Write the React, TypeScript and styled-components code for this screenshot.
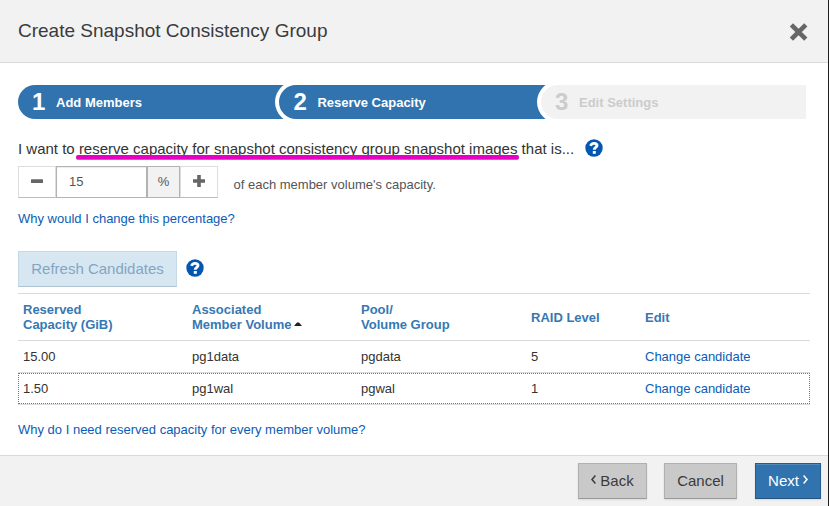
import React from "react";
import styled, { createGlobalStyle } from "styled-components";

const GlobalStyle = createGlobalStyle`
  *, *::before, *::after { box-sizing: border-box; }
  body {
    margin: 0;
    font-family: "Liberation Sans", Arial, sans-serif;
    font-size: 13px;
    color: #3b3b3b;
    background: #fff;
  }
`;

const Dialog = styled.div`
  display: flex;
  flex-direction: column;
  width: 829px;
  height: 506px;
  overflow: hidden;
  background: #fff;
  border-right: 1px solid #1e1e1e;
`;

const Header = styled.header`
  display: flex;
  align-items: center;
  justify-content: space-between;
  flex: none;
  height: 63px;
  padding: 0 19px 0 18px;
  background: #f2f2f2;
  border-bottom: 1px solid #dadada;
`;

const Title = styled.h1`
  margin: 0;
  font-size: 19px;
  line-height: 22px;
  font-weight: 400;
  color: #3b3b3b;
`;

const CloseButton = styled.button`
  display: flex;
  width: 20px;
  height: 20px;
  margin-top: 2px;
  padding: 0;
  border: 0;
  background: none;
  color: #666;
`;

const Body = styled.main`
  flex: none;
  height: 392px;
  padding: 22px 18px 0;
`;

const Steps = styled.ol`
  display: grid;
  grid-template-columns: 261.4px 261.6px 265px;
  width: 788px;
  height: 34px;
  margin: 0;
  padding: 0;
  overflow: hidden;
  list-style: none;
`;

const Step = styled.li<{ $pending?: boolean }>`
  display: flex;
  align-items: center;
  margin-right: ${(p) => (p.$pending ? 0 : -17)}px;
  padding-left: 14px;
  font-size: 13px;
  font-weight: 700;
  border-radius: 17px 0 0 17px;
  box-shadow: 0 0 0 4px #fff;
  color: ${(p) => (p.$pending ? "#ccc" : "#fff")};
  background: ${(p) => (p.$pending ? "#f2f2f2" : "#3073ae")};
`;

const StepNumber = styled.span`
  width: 24px;
  font-size: 24px;
  line-height: 34px;
`;

const Prompt = styled.div`
  display: flex;
  align-items: center;
  height: 20px;
  margin-top: 19px;
  font-size: 15px;
  color: #333;
  white-space: pre;
`;

const Marked = styled.span`
  position: relative;

  &::after {
    content: "";
    position: absolute;
    left: -3px;
    right: -2px;
    top: 15px;
    height: 4px;
    border-radius: 2px;
    background: #e600c4;
    box-shadow: 0 1px 0 rgba(70, 70, 70, 0.65);
  }
`;

const HelpBadge = styled.svg<{ $gap: number }>`
  width: 18px;
  height: 18px;
  flex: none;
  margin-left: ${(p) => p.$gap}px;
`;

const CapacityRow = styled.div`
  display: flex;
  height: 32px;
  margin-top: 8px;
`;

const SpinButton = styled.button`
  display: flex;
  align-items: center;
  justify-content: center;
  width: 38px;
  height: 32px;
  padding: 0 0 2px;
  border: 1px solid #ddd;
  border-bottom-color: #bbb;
  background: #fff;
  color: #666;
`;

const PercentInput = styled.input`
  width: 91px;
  height: 32px;
  padding: 0 12px 1px;
  border: 1px solid #b3b3b3;
  border-radius: 0;
  outline: 0;
  background: #fff;
  box-shadow: inset 0 1px 1px rgba(0, 0, 0, 0.08);
  font: 13px "Liberation Sans", Arial, sans-serif;
  color: #555;
`;

const Unit = styled.span`
  width: 33px;
  height: 32px;
  border: 1px solid #b3b3b3;
  background: #f2f2f2;
  color: #555;
  line-height: 29px;
  text-align: center;
`;

const CapacityNote = styled.span`
  margin-left: 15.5px;
  padding-top: 3px;
  line-height: 31px;
  color: #555;
`;

const Link = styled.a`
  color: #0b5cb5;
  text-decoration: none;
`;

const HelpLine = styled.div<{ $top: number }>`
  margin-top: ${(p) => p.$top}px;
  line-height: 16px;
`;

const RefreshRow = styled.div`
  display: flex;
  align-items: center;
  margin-top: 24px;
  height: 36px;

  ${HelpBadge} {
    margin-bottom: 2px;
  }
`;

const RefreshButton = styled.button`
  width: 159px;
  height: 36px;
  padding: 0 0 2px;
  border: 1px solid #c5d8e4;
  border-bottom-color: #b0c5d3;
  background: #d7e7f1;
  color: #83a5c4;
  font: 15px "Liberation Sans", Arial, sans-serif;
`;

const Table = styled.table`
  width: 792px;
  margin-top: 6px;
  border-collapse: separate;
  border-spacing: 0;
  table-layout: fixed;
`;

const HeadCell = styled.th<{ $width: number }>`
  width: ${(p) => p.$width}px;
  height: 48px;
  padding: 0 5px;
  border-top: 1px solid #dadada;
  border-bottom: 1px solid #dadada;
  line-height: 15px;
  text-align: left;
  vertical-align: middle;
  color: #3778b3;
`;

const SortArrow = styled.svg`
  width: 8px;
  height: 4px;
  margin-left: 2.5px;
  vertical-align: 3px;
`;

const Row = styled.tr<{ $focused?: boolean }>`
  position: relative;

  &::after {
    content: "";
    display: ${(p) => (p.$focused ? "block" : "none")};
    position: absolute;
    inset: 0 0 1px;
    border: 1px dotted #777;
    pointer-events: none;
  }
`;

const Cell = styled.td`
  height: 32px;
  padding: 0 5px;
  border-bottom: 1px solid #dadada;
  color: #333;
`;

const Footer = styled.footer`
  display: flex;
  flex: none;
  justify-content: flex-end;
  height: 51px;
  padding: 7px 7px 0 0;
  background: #f2f2f2;
  border-top: 1px solid #dadada;
`;

const FooterButton = styled.button<{ $width: number; $gap: number; $primary?: boolean }>`
  display: flex;
  align-items: center;
  justify-content: center;
  gap: 4px;
  width: ${(p) => p.$width}px;
  height: 36px;
  margin-right: ${(p) => p.$gap}px;
  padding: 0 0 2px;
  border: 1px solid ${(p) => (p.$primary ? "#265d8e" : "#b0b0b0")};
  border-bottom-color: ${(p) => (p.$primary ? "#24547e" : "#999")};
  background: ${(p) => (p.$primary ? "#3073ae" : "#c9c9c9")};
  box-shadow: 0 1px 2px rgba(0, 0, 0, 0.1)${(p) => (p.$primary ? ", inset 0 1px 0 #5289bb" : "")};
  color: ${(p) => (p.$primary ? "#fff" : "#3b3b3b")};
  font: 15px "Liberation Sans", Arial, sans-serif;
`;

const Chevron = styled.svg`
  width: 5px;
  height: 9px;
  margin-bottom: 2px;
`;

const Help = ({ gap }: { gap: number }) => (
  <HelpBadge $gap={gap} viewBox="0 0 18 18">
    <circle cx="9" cy="9" r="8.7" fill="#0457b0" />
    <path
      d="M5.6 6.9C6.2 5 7.3 4.4 9 4.4c1.8 0 3 .8 3 2.1 0 1.9-2.8 1.9-2.8 4.3"
      fill="none"
      stroke="#fff"
      strokeWidth="2.9"
    />
    <rect x="7.8" y="12" width="3" height="2.8" fill="#fff" />
  </HelpBadge>
);

const rows = [
  { capacity: "15.00", volume: "pg1data", pool: "pgdata", raid: "5" },
  { capacity: "1.50", volume: "pg1wal", pool: "pgwal", raid: "1", focused: true },
];

export default function App() {
  return (
    <>
      <GlobalStyle />
      <Dialog>
        <Header>
          <Title>Create Snapshot Consistency Group</Title>
          <CloseButton aria-label="Close">
            <svg width="20" height="20" viewBox="0 0 20 20">
              <path
                d="M2.4 2.8l14.4 14.4M16.8 2.8L2.4 17.2"
                stroke="currentColor"
                strokeWidth="4.6"
              />
            </svg>
          </CloseButton>
        </Header>
        <Body>
          <Steps>
            <Step><StepNumber>1</StepNumber>Add Members</Step>
            <Step><StepNumber>2</StepNumber>Reserve Capacity</Step>
            <Step $pending><StepNumber>3</StepNumber>Edit Settings</Step>
          </Steps>
          <Prompt>
            <span>I want to </span>
            <Marked>reserve capacity for snapshot consistency group snapshot images</Marked>
            <span> that is...</span>
            <Help gap={11} />
          </Prompt>
          <CapacityRow>
            <SpinButton aria-label="Decrease">
              <svg width="12" height="12" viewBox="0 0 12 12">
                <rect y="4.3" width="12" height="3.7" rx="0.5" fill="currentColor" />
              </svg>
            </SpinButton>
            <PercentInput defaultValue="15" />
            <Unit>%</Unit>
            <SpinButton aria-label="Increase">
              <svg width="12" height="12" viewBox="0 0 12 12">
                <path d="M4.2 0h3.6v4.2H12v3.6H7.8V12H4.2V7.8H0V4.2h4.2z" fill="currentColor" />
              </svg>
            </SpinButton>
            <CapacityNote>of each member volume's capacity.</CapacityNote>
          </CapacityRow>
          <HelpLine $top={13}><Link>Why would I change this percentage?</Link></HelpLine>
          <RefreshRow>
            <RefreshButton disabled>Refresh Candidates</RefreshButton>
            <Help gap={9} />
          </RefreshRow>
          <Table>
            <thead>
              <tr>
                <HeadCell $width={169}>Reserved<br />Capacity (GiB)</HeadCell>
                <HeadCell $width={169}>
                  Associated<br />Member Volume
                  <SortArrow viewBox="0 0 8 4"><path d="M0 4L3 .5h2L8 4z" fill="#222" /></SortArrow>
                </HeadCell>
                <HeadCell $width={170}>Pool/<br />Volume Group</HeadCell>
                <HeadCell $width={114}>RAID Level</HeadCell>
                <HeadCell $width={170}>Edit</HeadCell>
              </tr>
            </thead>
            <tbody>
              {rows.map((r) => (
                <Row key={r.volume} $focused={r.focused}>
                  <Cell>{r.capacity}</Cell>
                  <Cell>{r.volume}</Cell>
                  <Cell>{r.pool}</Cell>
                  <Cell>{r.raid}</Cell>
                  <Cell><Link>Change candidate</Link></Cell>
                </Row>
              ))}
            </tbody>
          </Table>
          <HelpLine $top={17}><Link>Why do I need reserved capacity for every member volume?</Link></HelpLine>
        </Body>
        <Footer>
          <FooterButton $width={69} $gap={17}>
            <Chevron viewBox="0 0 5 9"><path d="M4.4.6L1 4.5l3.4 3.9" fill="none" stroke="currentColor" strokeWidth="1.5" /></Chevron>
            Back
          </FooterButton>
          <FooterButton $width={73} $gap={18}>Cancel</FooterButton>
          <FooterButton $width={66} $gap={0} $primary>
            Next
            <Chevron viewBox="0 0 5 9"><path d="M.6.6L4 4.5.6 8.4" fill="none" stroke="currentColor" strokeWidth="1.5" /></Chevron>
          </FooterButton>
        </Footer>
      </Dialog>
    </>
  );
}
